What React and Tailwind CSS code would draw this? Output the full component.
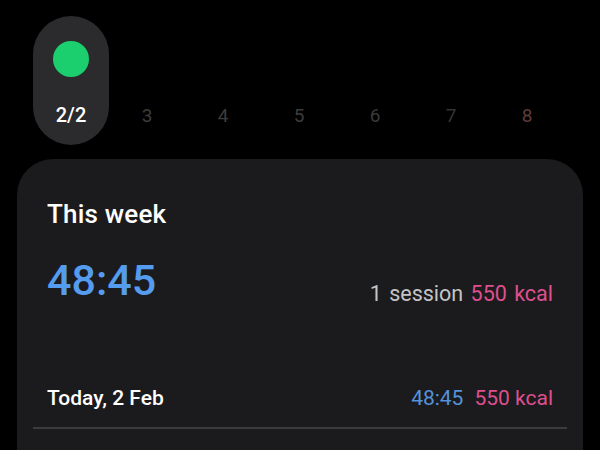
import React from "react";

export default function App() {
  const nums = [
    { n: "3", c: "text-[#3c3c3c]" },
    { n: "4", c: "text-[#3c3c3c]" },
    { n: "5", c: "text-[#3c3c3c]" },
    { n: "6", c: "text-[#3a3a3a]" },
    { n: "7", c: "text-[#343434]" },
    { n: "8", c: "text-[#5e3c38]" },
  ];
  return (
    <div className="w-[600px] h-[450px] overflow-hidden bg-black" style={{ fontFamily: "Roboto, 'Noto Sans', sans-serif" }}>
      <div className="flex pl-[33px] pt-[16px]">
        <div className="w-[76px] h-[129px] rounded-full bg-[#2b2b2d] flex flex-col items-center">
          <div className="mt-[25px] w-[36px] h-[36px] rounded-full bg-[#1ccf6e]" />
          <div className="mt-auto mb-[18px] text-[20px] leading-[24px] font-medium text-white">2/2</div>
        </div>
        {nums.map((x) => (
          <div key={x.n} className="w-[76px] h-[129px] flex flex-col items-center justify-end">
            <div className={"mb-[17px] text-[19px] leading-[24px] " + x.c}>{x.n}</div>
          </div>
        ))}
      </div>
      <div className="mt-[14px] ml-[17px] w-[566px] h-[400px] rounded-t-[36px] bg-[#1b1b1d] pt-[40px]">
        <div className="px-[30px]">
          <div className="text-[26px] leading-[31px] font-medium text-white tracking-[0.2px]">This week</div>
          <div className="mt-[25px] flex items-end justify-between">
            <div className="text-[43px] leading-[50px] font-medium text-[#559cef]">48:45</div>
            <div className="text-[21.5px] leading-[25px] mb-[-1px] [word-spacing:2px]">
              <span className="text-[#c4c4c6]">1 session</span>{" "}
              <span className="text-[#df4f8e]">550 kcal</span>
            </div>
          </div>
          <div className="mt-[81px] flex items-end justify-between">
            <div className="text-[21px] leading-[25px] font-medium text-white">Today, 2 Feb</div>
            <div className="text-[21px] leading-[25px]">
              <span className="text-[#5592dc]">48:45</span>
              <span className="ml-[11px] text-[#df4f8e]">550 kcal</span>
            </div>
          </div>
        </div>
        <div className="mx-[16px] mt-[16px] h-[2px] bg-[#3b3b3d]" />
      </div>
    </div>
  );
}
